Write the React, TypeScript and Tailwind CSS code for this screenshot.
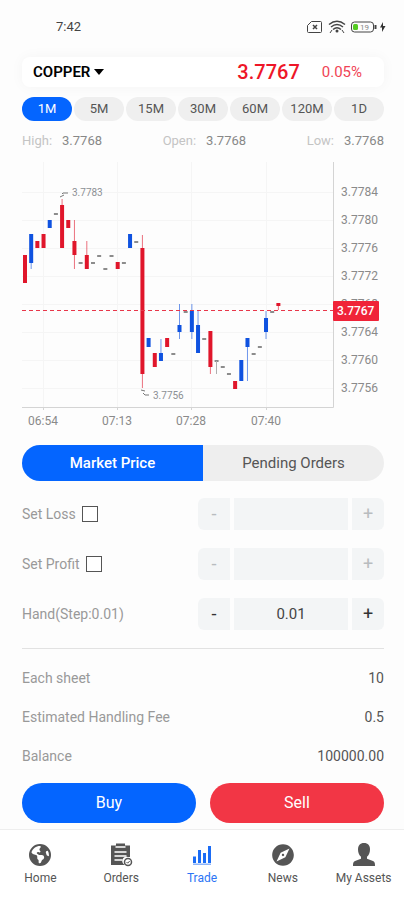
import React, { useState } from "react";
import { FaEarthAmericas } from "react-icons/fa6";
import { MdExplore } from "react-icons/md";

const RED = "#e0162b";
const BLUE = "#0f52e0";

type Candle = { top: number; bottom: number; color: string; wick?: [number, number] };
type Mark = number | Candle;

const red = (top: number, bottom: number, wick?: [number, number]): Candle => ({ top, bottom, color: RED, wick });
const blue = (top: number, bottom: number, wick?: [number, number]): Candle => ({ top, bottom, color: BLUE, wick });

// One entry per minute; a bare number is a flat minute drawn as a dash.
const candles: Mark[] = [
  red(100, 128), blue(79, 108, [79, 114]), red(86, 93), red(79, 93), blue(65, 73), 59,
  red(50, 93, [44, 93]), red(65, 73), red(86, 100, [65, 114]), 108, red(100, 114, [86, 114]),
  108, 101, 114, 101, red(107, 114), 108, blue(79, 93), 87, red(93, 219, [80, 233]),
  blue(183, 192), red(198, 212), blue(198, 206, [184, 206]), red(183, 192), 199,
  blue(170, 177, [149, 184]), 157, blue(156, 177, [149, 184]), blue(170, 198, [156, 198]), 184,
  red(176, 212, [176, 219]), 206, 212, 219, red(226, 234), blue(205, 226),
  blue(183, 192, [183, 226]), 199, 192, blue(163, 177, [156, 184]), 157, red(148, 151, [148, 155]),
];

const prices: [string, number][] = [
  ["3.7784", 37], ["3.7780", 65], ["3.7776", 93], ["3.7772", 121],
  ["3.7768", 149], ["3.7764", 177], ["3.7760", 205], ["3.7756", 233],
];
const times: [string, number][] = [["06:54", 21], ["07:13", 95], ["07:28", 169], ["07:40", 244]];

function Chart() {
  return (
    <svg viewBox="0 0 362 276" className="block h-auto w-full" role="img" aria-label="Copper one minute price chart">
      {prices.map(([p, y]) => <path key={p} d={`M0 ${y + 0.5}H311`} stroke="#f5f5f5" />)}
      {times.map(([t, x]) => (
        <g key={t}>
          <path d={`M${x + 0.5} 7V252`} stroke="#f5f5f5" />
          <path d={`M${x + 0.5} 252v3`} stroke="#d4d4d4" />
        </g>
      ))}
      <path d="M311.5 7V252.5H0" fill="none" stroke="#d4d4d4" />
      {candles.map((c, i) => {
        const x = 3 + i * 6.18;
        if (typeof c === "number") return <path key={i} d={`M${x - 2} ${c}h4`} stroke="#666" strokeWidth="1.5" />;
        return (
          <g key={i}>
            {c.wick && <path d={`M${x} ${c.wick[0]}V${c.wick[1]}`} stroke={c.color} strokeOpacity="0.6" />}
            <rect x={x - 2} y={c.top} width="4" height={c.bottom - c.top} fill={c.color} />
          </g>
        );
      })}
      <path d="M194.5 206v13" stroke="#b0b0b0" />
      <path d="M0 155.5H311" stroke="#e8374a" strokeDasharray="4 3" />
      <path d="M38 42l4-2M40 39l1-1h5" fill="none" stroke="#777" />
      <path d="M119 235l4 1M121 238l2 2h4" fill="none" stroke="#777" />
      <g fill="#8c9094" fontSize="10">
        <text x="50" y="41">3.7783</text>
        <text x="131" y="244">3.7756</text>
      </g>
      <g fill="#8a8a8a" fontSize="12">
        {prices.map(([p, y]) => <text key={p} x="319" y={y + 4}>{p}</text>)}
        {times.map(([t, x]) => <text key={t} x={x} y="270" textAnchor="middle">{t}</text>)}
      </g>
      <rect x="311" y="146" width="46" height="20" rx="1" fill="#f02338" />
      <text x="315" y="160" fill="#fff" fontSize="12" fontWeight="500">3.7767</text>
    </svg>
  );
}

function StatusBar() {
  return (
    <header className="flex h-13 items-center justify-between pl-14 pr-[18px] pt-0.5 text-[13px] text-[#444]">
      <span>7:42</span>
      <svg width="80" height="16" viewBox="0 0 80 16" fill="none" stroke="#444" aria-hidden="true">
        <path d="M5.5 2.5H14.5Q15.5 2.5 15.5 3.5V12.5Q15.5 13.5 14.5 13.5H2.5Q1.5 13.5 1.5 12.5V6.5Z" />
        <path d="M7 6l4 4M11 6l-4 4" strokeWidth="1.5" />
        <path d="M23 5.5Q31 -1 39 5.5M25 8Q31 3 37 8M27 10.5Q31 7 35 10.5" strokeWidth="1.5" />
        <circle cx="31" cy="12" r="1.5" fill="#444" stroke="none" />
        <path d="M24 14l2-3M38 14l-2-3" />
        <rect x="45.5" y="3" width="22" height="10" rx="3" />
        <rect x="47" y="5" width="5" height="6" rx="1.500" fill="#55cc22" stroke="none" />
        <path d="M69.5 6v4" strokeWidth="2" />
        <text x="54" y="11" fill="#888" stroke="none" fontSize="8">19</text>
        <path d="M77 3l-3 5.500h2V13l3.500-6H77z" fill="#333" stroke="none" />
      </svg>
    </header>
  );
}

function Stepper({ label, value, disabled, onStep }: { label: string; value: string; disabled?: boolean; onStep?: (d: number) => void }) {
  const button = "h-8 w-8 bg-[#f3f5f6] text-[18px] leading-none text-[#333] disabled:text-[#b8bcbf]";
  return (
    <div className="flex gap-1">
      <button aria-label={`Decrease ${label}`} disabled={disabled} onClick={() => onStep?.(-0.01)} className={`${button} rounded-l-md`}>-</button>
      <input aria-label={label} value={value} readOnly disabled={disabled} className="h-8 w-[114px] bg-[#f3f5f6] text-center text-[15px] text-[#444]" />
      <button aria-label={`Increase ${label}`} disabled={disabled} onClick={() => onStep?.(0.01)} className={`${button} rounded-r-md`}>+</button>
    </div>
  );
}

function OptionRow({ label }: { label: string }) {
  const [on, setOn] = useState(false);
  return (
    <div className="flex h-[50px] items-center justify-between">
      <label className="flex items-center gap-1.5 text-sm text-[#999]">
        {label}
        <input type="checkbox" checked={on} onChange={(e) => setOn(e.target.checked)} className="size-4 appearance-none border border-[#555] bg-white checked:bg-[#0465ff]" />
      </label>
      <Stepper label={label} value="" disabled={!on} />
    </div>
  );
}

const OrdersIcon = () => (
  <svg width="24" height="24" viewBox="0 0 24 24" aria-hidden="true">
    <path fill="#555" d="M2 2.500h5V.5h9v2h5V14h-2a4 4 0 0 0-3 8H2z" />
    <path d="M6.500 4h10M5.500 9h12M5.500 13h12M5.500 17h8" stroke="#fff" strokeWidth="1.500" />
    <circle cx="19" cy="19" r="3.500" fill="#fff" stroke="#555" strokeWidth="1.500" />
    <path d="M17.500 19l1.200 1.200 2-2.200" fill="none" stroke="#555" />
  </svg>
);
const TradeIcon = () => (
  <svg width="24" height="24" viewBox="0 0 24 24" fill="#1b6cf5" aria-hidden="true">
    <path d="M3 13.500h3V20H3zM8 7h3v13H8zM13 10h3v10h-3zM18 3h3v17h-3z" />
    <path d="M3 20.500h18V22H3z" opacity="0.5" />
  </svg>
);
const PersonIcon = () => (
  <svg width="24" height="24" viewBox="0 0 24 24" fill="#555" aria-hidden="true">
    <path d="M12 0c4 0 6 2.500 6 6.500 0 3-1.200 5.800-3 7.300v2l6 2.200c1.800.8 2 2 2 5H1c0-3 .2-4.200 2-5l6-2.200v-2C7.200 12.300 6 9.500 6 6.500 6 2.500 8 0 12 0z" />
  </svg>
);

const nav = [
  { name: "Home", icon: <FaEarthAmericas size={22} color="#555" /> },
  { name: "Orders", icon: <OrdersIcon /> },
  { name: "Trade", icon: <TradeIcon /> },
  { name: "News", icon: <MdExplore size={26} color="#555" /> },
  { name: "My Assets", icon: <PersonIcon /> },
];

export default function App() {
  const [hand, setHand] = useState(0.01);
  const [period, setPeriod] = useState("1M");
  const [mode, setMode] = useState("Market Price");
  return (
    <div className="flex min-h-screen flex-col bg-[#fdfdfd] font-[Roboto,sans-serif]">
      <StatusBar />
      <main className="flex-1 pl-[22px] pr-5">
        <section className="mt-[5px] flex h-[30px] items-center rounded-lg bg-white pl-[11px] pr-[22px] shadow-[0_0_14px_rgba(0,0,0,0.04)]">
          <button className="flex items-center gap-1 text-[15px] font-semibold text-black">
            COPPER
            <svg width="10" height="6" viewBox="0 0 10 6" aria-hidden="true"><path d="M0 0h10L5 6z" /></svg>
          </button>
          <span className="ml-auto text-xl font-medium text-[#ee1628]">3.7767</span>
          <span className="ml-[22px] text-[15px] text-[#f04455]">0.05%</span>
        </section>

        <div className="mt-2.5 grid grid-cols-7 gap-0.5">
          {["1M", "5M", "15M", "30M", "60M", "120M", "1D"].map((p) => (
            <button key={p} onClick={() => setPeriod(p)} className={`h-6 rounded-full text-[13px] ${p === period ? "bg-[#0465ff] text-white" : "bg-[#efefef] text-[#555]"}`}>{p}</button>
          ))}
        </div>

        <dl className="mt-2.5 flex h-5 items-center justify-between text-[13px]">
          {[["High:", "3.7768"], ["Open:", "3.7768"], ["Low:", "3.7768"]].map(([k, v]) => (
            <div key={k} className="flex gap-2.5"><dt className="text-[#c4c4c4]">{k}</dt><dd className="text-[#888]">{v}</dd></div>
          ))}
        </dl>

        <div className="mt-1"><Chart /></div>

        <div className="mt-3.5 grid h-9 grid-cols-2 overflow-hidden rounded-full text-[15px]">
          {["Market Price", "Pending Orders"].map((m) => (
            <button key={m} onClick={() => setMode(m)} className={m === mode ? "bg-[#0465ff] font-medium text-white" : "bg-[#eeeeee] text-[#555]"}>{m}</button>
          ))}
        </div>

        <div className="mt-2 border-b border-[#e2e2e2] pb-[9px]">
          <OptionRow label="Set Loss" />
          <OptionRow label="Set Profit" />
          <div className="flex h-[50px] items-center justify-between">
            <span className="text-sm text-[#999]">Hand(Step:0.01)</span>
            <Stepper label="Hand" value={hand.toFixed(2)} onStep={(d) => setHand((h) => Math.max(0.01, h + d))} />
          </div>
        </div>

        <dl className="mt-[9px] text-sm">
          {[["Each sheet", "10"], ["Estimated Handling Fee", "0.5"], ["Balance", "100000.00"]].map(([k, v]) => (
            <div key={k} className="flex h-[39px] items-center justify-between"><dt className="text-[#999]">{k}</dt><dd className="text-[#555]">{v}</dd></div>
          ))}
        </dl>

        <div className="mt-2 grid grid-cols-2 gap-3.5 text-base text-white">
          <button className="h-10 rounded-full bg-[#0465ff]">Buy</button>
          <button className="h-10 rounded-full bg-[#f23645]">Sell</button>
        </div>
      </main>
      <nav className="mt-1 grid h-[71px] grid-cols-5 border-t border-[#eeeeee] bg-white pt-3 text-xs">
        {nav.map(({ name, icon }) => (
          <a key={name} href="#" className={`flex flex-col items-center ${name === "Trade" ? "text-[#2b74f5]" : "text-[#555]"}`}>
            <span className="flex h-[26px] items-center">{icon}</span>
            <span className="leading-5">{name}</span>
          </a>
        ))}
      </nav>
    </div>
  );
}
